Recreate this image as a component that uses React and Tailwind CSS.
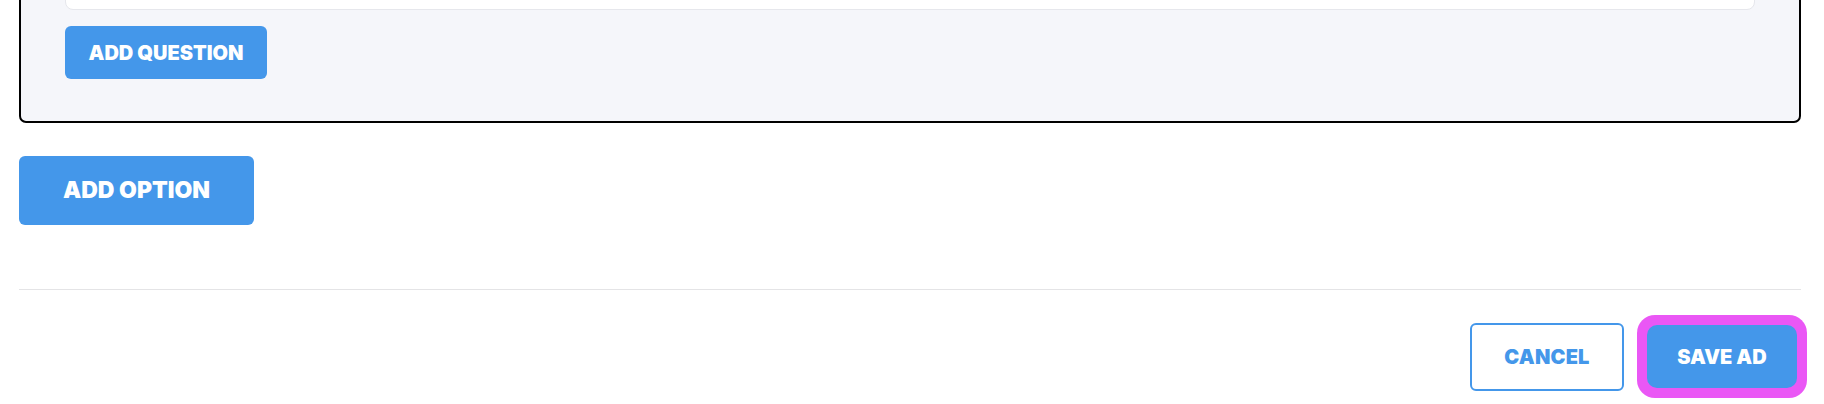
import React from "react";

const font = { fontFamily: "Inter, 'Noto Sans', sans-serif" };

export default function App() {
  return (
    <div
      className="w-full h-[404px] overflow-hidden bg-white pl-[19px] pr-[23px] flex flex-col"
      style={font}
    >
      <div className="-mt-[60px] border-2 border-black rounded-[7px] bg-[#f5f6fa] px-[44px] pt-[20px] pb-[42px] flex flex-col items-start">
        <div className="w-full h-[48px] bg-white border border-[#e6e7ec] rounded-[8px]"></div>
        <button className="mt-[16px] w-[202px] h-[53px] rounded-[6px] bg-[#4497ea] text-white text-[20px] font-black tracking-[0px] flex items-center justify-center">
          ADD QUESTION
        </button>
      </div>

      <button className="mt-[33px] w-[235px] h-[69px] rounded-[6px] bg-[#4497ea] text-white text-[23px] font-black tracking-[0px] flex items-center justify-center">
        ADD OPTION
      </button>

      <div className="mt-[64px] h-px bg-[#e4e4e6] w-full"></div>

      <div className="mt-[25px] flex items-center justify-end gap-[13px] -mr-[6px]">
        <button className="w-[154px] h-[68px] rounded-[6px] border-2 border-[#4497ea] bg-white text-[#4497ea] text-[20px] font-black tracking-[0.2px] flex items-center justify-center">
          CANCEL
        </button>
        <div className="w-[170px] h-[83px] rounded-[18px] bg-[#ea57f5] p-[10px]">
          <button className="w-full h-full rounded-[10px] bg-[#4497ea] text-white text-[20px] font-black tracking-[0px] flex items-center justify-center">
            SAVE AD
          </button>
        </div>
      </div>
    </div>
  );
}
